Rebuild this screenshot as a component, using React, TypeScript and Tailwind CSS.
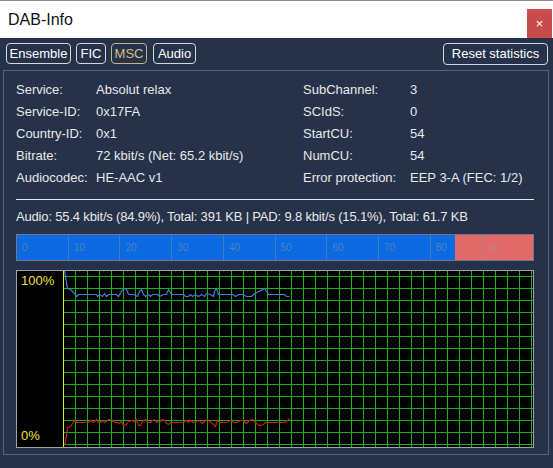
import React from "react";

const blue: [number, number][] = [
  [64, 271], [66, 283], [67, 289], [70, 290], [73, 293], [76, 297], [78, 295], [83, 295], [90, 295], [96, 295], [97, 297], [99, 295], [102, 297], [104, 294], [106, 297], [108, 295], [112, 295], [116, 295], [118, 297], [121, 292], [123, 289], [126, 290], [128, 295], [133, 295], [137, 297], [139, 292], [141, 290], [143, 295], [145, 297], [148, 295], [150, 297], [152, 295], [157, 295], [159, 297], [163, 295], [166, 295], [168, 290], [171, 295], [177, 295], [183, 295], [185, 297], [188, 297], [190, 295], [192, 297], [195, 295], [198, 297], [201, 295], [204, 297], [206, 294], [210, 295], [213, 297], [214, 292], [216, 289], [218, 295], [221, 295], [227, 295], [232, 295], [235, 297], [238, 295], [242, 295], [246, 297], [251, 297], [253, 295], [262, 290], [264, 289], [266, 292], [268, 295], [272, 295], [278, 295], [282, 295], [284, 295], [286, 297], [289, 297],
];

const red: [number, number][] = [
  [64, 446], [66, 436], [67, 428], [70, 427], [72, 424], [74, 421], [76, 423], [80, 423], [84, 423], [88, 423], [90, 421], [93, 423], [96, 420], [98, 423], [100, 422], [104, 423], [108, 420], [111, 420], [114, 423], [117, 423], [119, 424], [121, 422], [123, 426], [126, 425], [128, 422], [131, 421], [134, 422], [136, 420], [138, 426], [140, 426], [142, 422], [145, 420], [147, 423], [150, 423], [152, 421], [154, 420], [156, 423], [158, 422], [160, 422], [162, 420], [164, 421], [166, 424], [168, 425], [170, 423], [174, 423], [178, 423], [182, 423], [186, 421], [188, 423], [190, 421], [193, 423], [196, 422], [199, 421], [202, 424], [204, 422], [207, 420], [209, 422], [212, 424], [215, 427], [217, 421], [219, 423], [222, 423], [226, 423], [230, 421], [233, 423], [236, 423], [240, 421], [243, 421], [246, 424], [249, 421], [252, 420], [255, 423], [257, 425], [260, 426], [263, 425], [265, 423], [268, 423], [272, 423], [276, 423], [280, 423], [284, 423], [287, 421], [289, 419],
];

const pts = (a: [number, number][]) => a.map(([x, y]) => `${x + 0.5},${y + 0.5}`).join(" ");

const leftRows = [
  ["Service:", "Absolut relax"],
  ["Service-ID:", "0x17FA"],
  ["Country-ID:", "0x1"],
  ["Bitrate:", "72 kbit/s (Net: 65.2 kbit/s)"],
  ["Audiocodec:", "HE-AAC v1"],
];
const rightRows = [
  ["SubChannel:", "3"],
  ["SCIdS:", "0"],
  ["StartCU:", "54"],
  ["NumCU:", "54"],
  ["Error protection:", "EEP 3-A (FEC: 1/2)"],
];

function Grid() {
  const vx: number[] = [];
  for (let x = 75; x < 533; x += 12) vx.push(x);
  const hy: number[] = [];
  for (let y = 277; y < 448; y += 12) hy.push(y);
  return (
    <svg width={469} height={176} viewBox="64 272 469 176" className="block">
      <rect x={64} y={272} width={469} height={176} fill="#000" />
      {vx.map((x) => (
        <line key={"v" + x} x1={x + 0.5} y1={272} x2={x + 0.5} y2={448} stroke="#22ad22" strokeWidth={1} />
      ))}
      {hy.map((y) => (
        <line key={"h" + y} x1={64} y1={y + 0.5} x2={533} y2={y + 0.5} stroke="#22ad22" strokeWidth={1} />
      ))}
      <polyline points={pts(blue)} fill="none" stroke="#3d7fd6" strokeWidth={1.2} />
      <polyline points={pts(red)} fill="none" stroke="#c81e1e" strokeWidth={1.2} />
    </svg>
  );
}

export default function App() {
  const ticks = ["0", "10", "20", "30", "40", "50", "60", "70", "80", "90"];
  return (
    <div
      className="w-[553px] h-[468px] bg-[#26324a] flex flex-col overflow-hidden text-[#e8e8e8]"
      style={{ fontFamily: '"Liberation Sans", Arial, sans-serif' }}
    >
      {/* title bar */}
      <div className="h-[38px] bg-white border-t border-[#8c8c8c] flex items-stretch justify-between">
        <div className="pl-[8px] pt-[9px] text-[16px] leading-[20px] text-[#111]">DAB-Info</div>
        <div className="mt-[8px] mr-[1px] w-[25px] bg-[#c94c4c] flex items-center justify-center text-white text-[13px] leading-none">
          ×
        </div>
      </div>

      {/* tabs row */}
      <div className="mt-[5px] h-[22px] flex items-start justify-between pl-[6px] pr-[5px]">
        <div className="flex gap-[5px]">
          <div className="w-[65px] h-[21px] border border-[#d8d8d8] rounded-[4px] flex items-center justify-center text-[13px] text-white">Ensemble</div>
          <div className="w-[30px] h-[21px] border border-[#d8d8d8] rounded-[4px] flex items-center justify-center text-[13px] text-white">FIC</div>
          <div className="w-[36px] h-[21px] border border-[#c9b37e] rounded-[4px] flex items-center justify-center text-[13px] text-[#d4bd85]">MSC</div>
          <div className="ml-[1px] w-[43px] h-[21px] border border-[#d8d8d8] rounded-[4px] flex items-center justify-center text-[13px] text-white">Audio</div>
        </div>
        <div className="w-[105px] h-[22px] border border-[#d8d8d8] rounded-[4px] flex items-center justify-center text-[13px] text-white">Reset statistics</div>
      </div>

      {/* panel */}
      <div className="mt-[5px] ml-[3px] w-[546px] h-[385px] border border-[#55627c] pt-[8px] px-[12px]">
        <div className="flex">
          <div className="w-[287px] flex flex-col">
            {leftRows.map(([l, v]) => (
              <div key={l} className="h-[22px] flex items-center text-[13px]">
                <span className="w-[80px]">{l}</span>
                <span>{v}</span>
              </div>
            ))}
          </div>
          <div className="flex flex-col">
            {rightRows.map(([l, v]) => (
              <div key={l} className="h-[22px] flex items-center text-[13px]">
                <span className="w-[107px]">{l}</span>
                <span>{v}</span>
              </div>
            ))}
          </div>
        </div>

        <div className="mt-[10px] h-px w-[518px] bg-[#e8e8e8]" />

        <div className="mt-[8px] h-[18px] flex items-center text-[13px] tracking-[-0.17px]">
          Audio: 55.4 kbit/s (84.9%), Total: 391 KB | PAD: 9.8 kbit/s (15.1%), Total: 61.7 KB
        </div>

        <div className="mt-[8px] relative w-[518px] h-[27px] border border-[#6f7890] flex">
          <div className="h-full bg-[#0c6be0]" style={{ width: "84.9%" }} />
          <div className="h-full flex-1 bg-[#e26a6a]" />
          <div className="absolute inset-0 flex">
            {ticks.map((t, i) => (
              <div
                key={t}
                className={
                  "flex-1 flex items-center pl-[5px] text-[10px] text-[#a0a0a0]/45 " +
                  (i === 0 ? "" : "border-l border-[#909090]/45")
                }
              >
                {t}
              </div>
            ))}
          </div>
        </div>

        <div className="mt-[9px] w-[518px] h-[178px] border border-[#a2a2a2] bg-black flex">
          <div className="w-[46px] flex flex-col justify-between pl-[4px] pt-[2px] pb-[3px] text-[13px] leading-[16px] text-[#f2e33a]">
            <span>100%</span>
            <span>0%</span>
          </div>
          <div className="w-px bg-[#e8e82a]" />
          <Grid />
        </div>
      </div>
    </div>
  );
}
